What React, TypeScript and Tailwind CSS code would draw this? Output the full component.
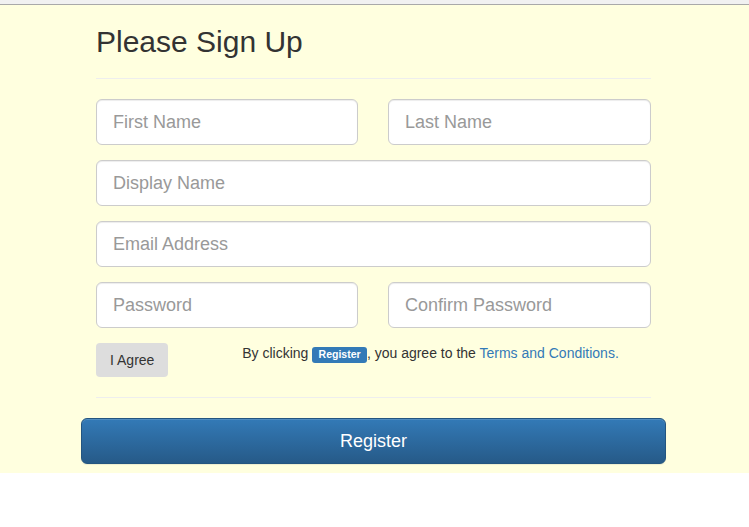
import React from 'react';

const inputClass =
  'h-[46px] w-full rounded-[6px] border border-[#ccc] bg-white px-4 text-[18px] text-[#555] shadow-[inset_0_1px_1px_rgba(0,0,0,0.075)] outline-none placeholder:text-[#999]';

export default function App() {
  return (
    <div className="min-h-[527px] bg-white font-['Liberation_Sans',Arial,sans-serif] text-[14px] leading-[20px] text-[#333]">
      {/* browser strip */}
      <div className="h-[4px] bg-[#f1f1f1]" />
      <div className="h-px bg-[#a9a9a9]" />

      <div className="bg-[#ffffdf] pb-[9px]">
        <div className="ml-[81px] w-[585px]">
          <form className="px-[15px]" onSubmit={(e) => e.preventDefault()}>
            <h2 className="pt-[20px] text-[30px] leading-[33px] font-normal">Please Sign Up</h2>
            <hr className="mt-[20px] mb-[20px] border-t border-[#eee]" />

            <div className="grid grid-cols-[262px_1fr] gap-x-[30px]">
              <div className="mb-[15px]">
                <input className={inputClass} placeholder="First Name" />
              </div>
              <div className="mb-[15px]">
                <input className={inputClass} placeholder="Last Name" />
              </div>
            </div>
            <div className="mb-[15px]">
              <input className={inputClass} placeholder="Display Name" />
            </div>
            <div className="mb-[15px]">
              <input className={inputClass} placeholder="Email Address" />
            </div>
            <div className="grid grid-cols-[262px_1fr] gap-x-[30px]">
              <div className="mb-[15px]">
                <input type="password" className={inputClass} placeholder="Password" />
              </div>
              <div className="mb-[15px]">
                <input type="password" className={inputClass} placeholder="Confirm Password" />
              </div>
            </div>
          </form>

          {/* agree row */}
          <div className="flex">
            <div className="w-[146.25px] px-[15px]">
              <button
                type="button"
                className="h-[34px] rounded-[4px] border border-transparent bg-[#ddd] px-[13px] text-[14px] text-[#333]"
              >
                I Agree
              </button>
            </div>
            <div className="flex-1 px-[15px]">
              By clicking{' '}
              <span className="inline-block rounded-[3px] bg-[#337ab7] px-[6.3px] pt-[2.1px] pb-[3.15px] align-baseline text-[10.5px] leading-none font-bold text-white">
                Register
              </span>
              , you agree to the <a className="text-[#337ab7]">Terms and Conditions.</a>
            </div>
          </div>

          <div className="px-[15px]">
            <hr className="my-[20px] border-t border-[#eee]" />
          </div>

          <button
            type="submit"
            className="block h-[46px] w-full rounded-[6px] border border-[#245580] bg-gradient-to-b from-[#337ab7] to-[#265a88] text-[18px] text-white shadow-[inset_0_1px_0_rgba(255,255,255,0.15),0_1px_1px_rgba(0,0,0,0.075)]"
          >
            Register
          </button>
        </div>
      </div>
    </div>
  );
}
